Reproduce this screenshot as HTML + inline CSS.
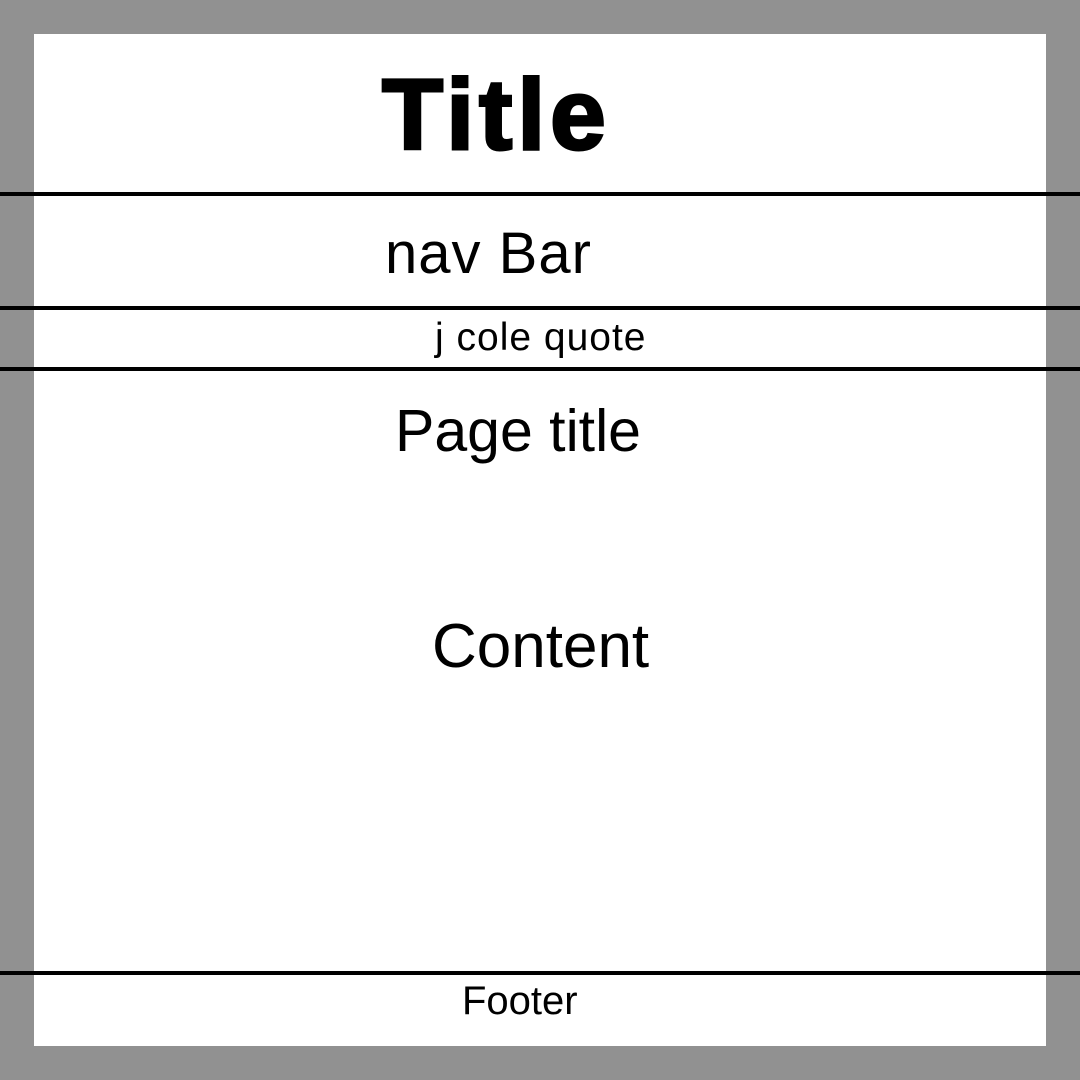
<!DOCTYPE html>
<html><head><style>
body{margin:0;width:1080px;height:1080px;background:#919191;position:relative;overflow:hidden;font-family:"Liberation Sans",sans-serif;color:#000}
.w{position:absolute;left:34px;top:34px;width:1012px;height:1012px;background:#fff}
.l{position:absolute;left:0;width:1080px;height:4px;background:#000}
.t{position:absolute;line-height:1;white-space:nowrap}
</style></head><body>
<div class="w"></div>
<div class="l" style="top:192px"></div>
<div class="l" style="top:306px"></div>
<div class="l" style="top:367px"></div>
<div class="l" style="top:971px"></div>
<div class="t" style="left:382px;top:65px;font-size:100px;font-weight:bold;letter-spacing:5px;-webkit-text-stroke:3px #000">Title</div>
<div class="t" style="left:385px;top:225px;font-size:58px;letter-spacing:1px">nav Bar</div>
<div class="t" style="left:435px;top:318px;font-size:39px;letter-spacing:1px">j cole quote</div>
<div class="t" style="left:395px;top:402px;font-size:59px">Page title</div>
<div class="t" style="left:432px;top:616px;font-size:62px">Content</div>
<div class="t" style="left:462px;top:981px;font-size:40px">Footer</div>
</body></html>
